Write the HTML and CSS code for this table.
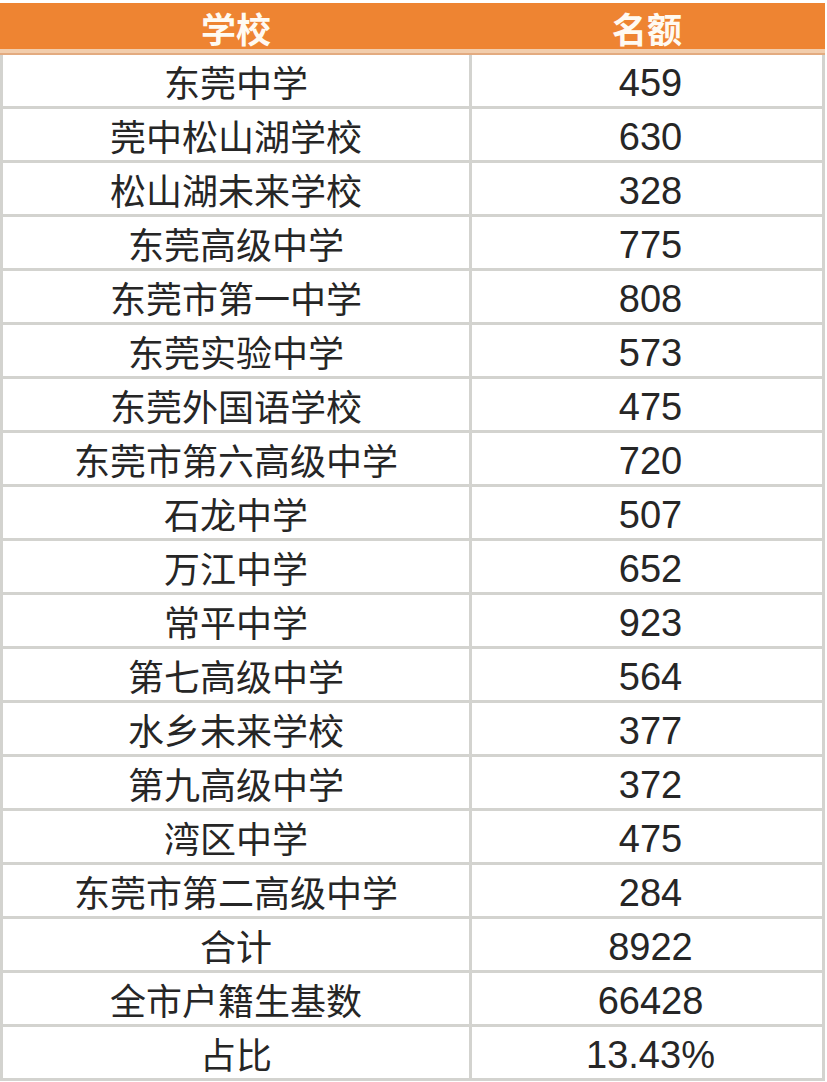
FILE: index.html
```html
<!DOCTYPE html>
<html lang="zh-CN">
<head>
<meta charset="utf-8">
<title>学校名额</title>
<link rel="stylesheet" href="styles.css">
</head>
<body>
<div class="sheet">
  <div class="head">
    <div class="hc">学校</div>
    <div class="hc">名额</div>
  </div>
  <div class="grid">
    <div class="c name">东莞中学</div><div class="c num">459</div>
    <div class="c name">莞中松山湖学校</div><div class="c num">630</div>
    <div class="c name">松山湖未来学校</div><div class="c num">328</div>
    <div class="c name">东莞高级中学</div><div class="c num">775</div>
    <div class="c name">东莞市第一中学</div><div class="c num">808</div>
    <div class="c name">东莞实验中学</div><div class="c num">573</div>
    <div class="c name">东莞外国语学校</div><div class="c num">475</div>
    <div class="c name">东莞市第六高级中学</div><div class="c num">720</div>
    <div class="c name">石龙中学</div><div class="c num">507</div>
    <div class="c name">万江中学</div><div class="c num">652</div>
    <div class="c name">常平中学</div><div class="c num">923</div>
    <div class="c name">第七高级中学</div><div class="c num">564</div>
    <div class="c name">水乡未来学校</div><div class="c num">377</div>
    <div class="c name">第九高级中学</div><div class="c num">372</div>
    <div class="c name">湾区中学</div><div class="c num">475</div>
    <div class="c name">东莞市第二高级中学</div><div class="c num">284</div>
    <div class="c name">合计</div><div class="c num">8922</div>
    <div class="c name">全市户籍生基数</div><div class="c num">66428</div>
    <div class="c name">占比</div><div class="c num">13.43%</div>
  </div>
</div>
</body>
</html>
```
FILE: styles.css
```css
html, body {
  margin: 0;
  padding: 0;
  background: #ffffff;
}

.sheet {
  width: 825px;
  margin-top: 3px;
}

.head {
  display: grid;
  grid-template-columns: 466px 350px;
  column-gap: 3px;
  padding: 0 3px;
  height: 46px;
  background: #ee8432;
  border-bottom: 4px solid #f2cdac;
}

.hc {
  display: flex;
  align-items: center;
  justify-content: center;
  color: #fffaf2;
  font-family: "Noto Sans CJK SC", sans-serif;
  font-weight: 700;
  font-size: 35px;
  line-height: 1;
  padding-top: 2px;
}

.grid {
  display: grid;
  grid-template-columns: 466px 350px;
  grid-auto-rows: 51px;
  gap: 3px;
  padding: 0 3px 3px 3px;
  background: #d3d3cf;
  border-top: 2px solid #e3ab80;
}

.c {
  background: #ffffff;
  display: flex;
  align-items: center;
  justify-content: center;
  color: #262626;
  line-height: 1;
}

.name {
  font-family: "Noto Sans CJK SC", sans-serif;
  font-size: 36px;
  padding-top: 1px;
}

.num {
  font-family: "Liberation Sans", Arial, sans-serif;
  font-size: 38px;
  padding-top: 4px;
  padding-left: 7px;
}
```
